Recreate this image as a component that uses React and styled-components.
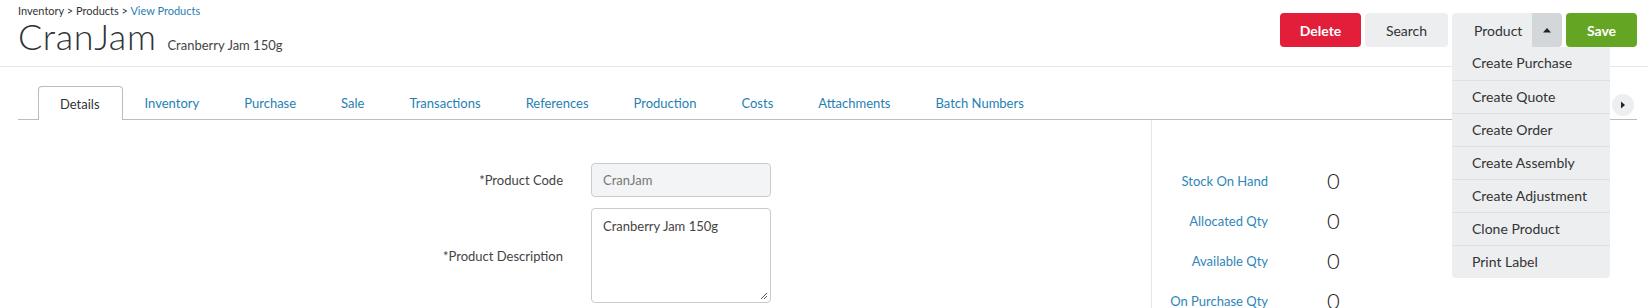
import React from "react";
import styled, { createGlobalStyle } from "styled-components";

const tabs = [
  "Details",
  "Inventory",
  "Purchase",
  "Sale",
  "Transactions",
  "References",
  "Production",
  "Costs",
  "Attachments",
  "Batch Numbers",
];

const menuItems = [
  "Create Purchase",
  "Create Quote",
  "Create Order",
  "Create Assembly",
  "Create Adjustment",
  "Clone Product",
  "Print Label",
];

const stats = [
  { label: "Stock On Hand", value: 0 },
  { label: "Allocated Qty", value: 0 },
  { label: "Available Qty", value: 0 },
  { label: "On Purchase Qty", value: 0 },
];

const GlobalStyle = createGlobalStyle`
  body {
    margin: 0;
    font-family: Lato, "Open Sans", sans-serif;
    color: #333;
    background: #fff;
    overflow: hidden;
  }
`;

const Page = styled.div`
  width: 1648px;
  height: 308px;
  overflow: hidden;
`;

const Header = styled.header`
  height: 66px;
  border-bottom: 1px solid #e2e8eb;
  display: flex;
  justify-content: space-between;
  padding: 0 11px 0 18px;
`;

const TitleBlock = styled.div`
  display: flex;
  flex-direction: column;
`;

const Breadcrumb = styled.div`
  font-size: 11px;
  margin-top: 4px;
  color: #333;

  a {
    color: #2a7db3;
    text-decoration: none;
  }
`;

const TitleRow = styled.div`
  display: flex;
  align-items: baseline;
  gap: 11px;
  margin-top: -3px;
`;

const Title = styled.h1`
  margin: 0;
  font-size: 36px;
  font-weight: 300;
  letter-spacing: 0.6px;
  color: #2f3337;
`;

const Subtitle = styled.span`
  font-size: 13px;
  color: #444;
`;

const Actions = styled.div`
  display: flex;
  gap: 4px;
  margin-top: 13px;
  height: 34px;
`;

const Button = styled.button`
  height: 34px;
  border: none;
  border-radius: 4px;
  font-family: inherit;
  font-size: 14px;
  padding: 0;
  width: ${(p) => p.$w}px;
  background: ${(p) => p.$bg};
  color: ${(p) => p.$fg || "#333"};
  font-weight: ${(p) => (p.$bold ? 700 : 400)};
`;

const Split = styled.div`
  position: relative;
  display: flex;
`;

const SplitMain = styled.button`
  height: 34px;
  width: 80px;
  border: none;
  border-radius: 4px 0 0 0;
  background: #eceef0;
  font-family: inherit;
  font-size: 14px;
  color: #333;
  text-align: left;
  padding: 0 8px 0 22px;
`;

const SplitCaret = styled.button`
  height: 34px;
  width: 30px;
  border: none;
  border-radius: 0 4px 4px 0;
  background: #d3d7da;
  display: flex;
  align-items: center;
  justify-content: center;
  padding: 0;
`;

const Menu = styled.ul`
  position: absolute;
  top: 34px;
  left: 0;
  width: 158px;
  margin: 0;
  padding: 0;
  list-style: none;
  background: #eceef0;
  border-radius: 0 0 4px 4px;
  z-index: 5;
`;

const MenuItem = styled.li`
  height: 33px;
  line-height: 32px;
  padding-left: 20px;
  font-size: 14px;
  color: #333;
  border-top: ${(p) => (p.$first ? "none" : "1px solid #dde1e4")};
  box-sizing: border-box;
`;

const TabBar = styled.div`
  margin: 19px 11px 0 18px;
  height: 33px;
  border-bottom: 1px solid #bcbcbc;
  display: flex;
  align-items: flex-end;
  padding-left: 20px;
  position: relative;
`;

const Tab = styled.div`
  box-sizing: border-box;
  padding: 0 22px 0 21px;
  display: flex;
  align-items: center;
  font-size: 13px;
  color: ${(p) => (p.$active ? "#333" : "#1f7fb3")};
  border: 1px solid ${(p) => (p.$active ? "#bcbcbc" : "transparent")};
  border-bottom: none;
  border-radius: 4px 4px 0 0;
  background: #fff;
  margin-bottom: ${(p) => (p.$active ? "-1px" : "0")};
  height: ${(p) => (p.$active ? "34px" : "33px")};
`;

const ScrollButton = styled.div`
  position: absolute;
  right: 3px;
  top: 8px;
  width: 22px;
  height: 22px;
  border-radius: 50%;
  background: #eceef0;
  display: flex;
  align-items: center;
  justify-content: center;
`;

const Body = styled.div`
  display: flex;
  margin-left: 17px;
  height: 200px;
`;

const Main = styled.div`
  width: 1134px;
  padding-top: 43px;
`;

const FormRow = styled.div`
  display: grid;
  grid-template-columns: 546px 180px;
  column-gap: 28px;
  align-items: center;
  margin-bottom: 11px;
`;

const Label = styled.label`
  text-align: right;
  font-size: 13px;
  color: #444;
`;

const Input = styled.div`
  height: 34px;
  box-sizing: border-box;
  border: 1px solid #c9ccce;
  border-radius: 4px;
  background: #f3f4f5;
  font-size: 13px;
  color: #777;
  padding: 0 11px;
  display: flex;
  align-items: center;
`;

const TextArea = styled.div`
  position: relative;
  height: 95px;
  box-sizing: border-box;
  border: 1px solid #c9ccce;
  border-radius: 4px;
  background: #fff;
  font-size: 13px;
  font-weight: 400;
  color: #444;
  padding: 9px 11px;
`;

const Grip = styled.svg`
  position: absolute;
  right: 2px;
  bottom: 2px;
`;

const Side = styled.div`
  border-left: 1px solid #e2e8eb;
  padding-top: 47px;
  display: flex;
  flex-direction: column;
  gap: 18px;
`;

const StatRow = styled.div`
  display: grid;
  grid-template-columns: 116px auto;
  column-gap: 59px;
  align-items: center;
  height: 22px;
`;

const StatLabel = styled.span`
  text-align: right;
  font-size: 13px;
  color: #2f86b9;
`;

const StatValue = styled.span`
  font-size: 22px;
  font-weight: 300;
  color: #222;
`;

export default function App() {
  return (
    <Page>
      <GlobalStyle />
      <Header>
        <TitleBlock>
          <Breadcrumb>
            Inventory &gt; Products &gt; <a href="#">View Products</a>
          </Breadcrumb>
          <TitleRow>
            <Title>CranJam</Title>
            <Subtitle>Cranberry Jam 150g</Subtitle>
          </TitleRow>
        </TitleBlock>
        <Actions>
          <Button $w={81} $bg="#e21e3b" $fg="#fff" $bold>
            Delete
          </Button>
          <Button $w={83} $bg="#eceef0">
            Search
          </Button>
          <Split>
            <SplitMain>Product</SplitMain>
            <SplitCaret>
              <svg width="10" height="6" viewBox="0 0 10 6">
                <path d="M1 5.5 L5 1 L9 5.5 Z" fill="#222" />
              </svg>
            </SplitCaret>
            <Menu>
              {menuItems.map((m, i) => (
                <MenuItem key={m} $first={i === 0}>
                  {m}
                </MenuItem>
              ))}
            </Menu>
          </Split>
          <Button $w={71} $bg="#64a624" $fg="#fff" $bold>
            Save
          </Button>
        </Actions>
      </Header>

      <TabBar>
        {tabs.map((t, i) => (
          <Tab key={t} $active={i === 0}>
            {t}
          </Tab>
        ))}
        <ScrollButton>
          <svg width="6" height="8" viewBox="0 0 6 8">
            <path d="M1 0.5 L5 4 L1 7.5 Z" fill="#222" />
          </svg>
        </ScrollButton>
      </TabBar>

      <Body>
        <Main>
          <FormRow>
            <Label>*Product Code</Label>
            <Input>CranJam</Input>
          </FormRow>
          <FormRow>
            <Label>*Product Description</Label>
            <TextArea>
              Cranberry Jam 150g
              <Grip width="9" height="9" viewBox="0 0 9 9">
                <path d="M8 2 L2 8 M8 5 L5 8" stroke="#555" strokeWidth="1" />
              </Grip>
            </TextArea>
          </FormRow>
        </Main>
        <Side>
          {stats.map((s) => (
            <StatRow key={s.label}>
              <StatLabel>{s.label}</StatLabel>
              <StatValue>{s.value}</StatValue>
            </StatRow>
          ))}
        </Side>
      </Body>
    </Page>
  );
}
